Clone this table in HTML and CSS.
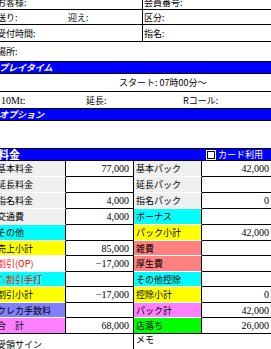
FILE: index.html
```html
<!DOCTYPE html>
<html lang="ja">
<head>
<meta charset="utf-8">
<title>伝票</title>
<link rel="stylesheet" href="styles.css">
</head>
<body>
<div class="sheet">
  <div class="info r1"><div class="l">お客様:</div><div class="r">会員番号:</div></div>
  <div class="info r2"><div class="l"><span class="send">送り:</span><span>迎え:</span></div><div class="r">区分:</div></div>
  <div class="info r3"><div class="l">受付時間:</div><div class="r">指名:</div></div>
  <div class="place">場所:</div>
  <div class="bar">プレイタイム</div>
  <div class="start">スタート: 07時00分～</div>
  <div class="ext"><span><span class="num">10Mt</span>:</span><span>延長:</span><span>Rコール:</span></div>
  <div class="bar">オプション</div>
  <div class="opt"></div>
  <div class="bar fee"><span class="title">料金</span><span class="card"><i class="box"></i>カード利用</span></div>
  <div class="fees">
    <div class="lb gray">基本料金</div><div class="v">77,000</div><div class="lb rl gray">基本パック</div><div class="v last">42,000</div>
    <div class="lb gray">延長料金</div><div class="v"></div><div class="lb rl gray">延長パック</div><div class="v last"></div>
    <div class="lb gray">指名料金</div><div class="v">4,000</div><div class="lb rl gray">指名パック</div><div class="v last">0</div>
    <div class="lb gray">交通費</div><div class="v">4,000</div><div class="lb rl cyan">ボーナス</div><div class="v last"></div>
    <div class="lb cyan">その他</div><div class="v"></div><div class="lb rl yellow">パック小計</div><div class="v last">42,000</div>
    <div class="lb yellow">売上小計</div><div class="v">85,000</div><div class="lb rl salmon">雑費</div><div class="v last"></div>
    <div class="lb red">割引(OP)</div><div class="v">−17,000</div><div class="lb rl salmon">厚生費</div><div class="v last"></div>
    <div class="lb cyan red">△割引手打</div><div class="v"></div><div class="lb rl cyan">その他控除</div><div class="v last"></div>
    <div class="lb yellow">割引小計</div><div class="v">−17,000</div><div class="lb rl yellow">控除小計</div><div class="v last">0</div>
    <div class="lb violet">クレカ手数料</div><div class="v"></div><div class="lb rl pink">パック計</div><div class="v last">42,000</div>
    <div class="lb pink end">合　計</div><div class="v">68,000</div><div class="lb rl green end">店落ち</div><div class="v last">26,000</div>
    <div class="sign">受領サイン</div><div class="memo">メモ</div>
  </div>
</div>
</body>
</html>
```

FILE: styles.css
```css
body {
  margin: 0;
  background: #fff;
  color: #000;
  font-family: "Noto Sans CJK JP", "Noto Sans", sans-serif;
  font-size: 9px;
  line-height: 11px;
  overflow: hidden;
}

.sheet {
  margin: -5px 0 0 -3px;
  width: 274px;
}

.info {
  display: grid;
  grid-template-columns: 146px 1fr;
  border-bottom: 1px solid #000;
  box-sizing: border-box;
}

.info .l {
  border-right: 1px solid #000;
  display: flex;
  align-items: center;
  white-space: nowrap;
}

.info .r {
  padding-left: 1px;
  display: flex;
  align-items: center;
}

.r1 { height: 15px; }
.r2 { height: 15px; }
.r3 { height: 17px; }

.send {
  display: inline-block;
  width: 71px;
}

.place {
  height: 19px;
  display: flex;
  align-items: center;
}

.bar {
  height: 13px;
  box-sizing: border-box;
  border-top: 1px solid #000;
  border-bottom: 1px solid #000;
  background: #0000ff;
  color: #fff;
  font-weight: bold;
  font-style: italic;
  display: flex;
  align-items: center;
  padding-left: 2px;
}

.start {
  height: 18px;
  box-sizing: border-box;
  border-bottom: 1px solid #000;
  padding-left: 122px;
  display: flex;
  align-items: center;
}

.ext {
  height: 16px;
  display: grid;
  grid-template-columns: 85px 97px 1fr;
  padding-left: 4px;
  align-items: center;
}

.num {
  font-family: "Liberation Serif", serif;
  font-size: 10px;
}

.opt {
  height: 27px;
}

.fee {
  font-style: normal;
  padding-left: 1px;
}

.fee .title {
  font-size: 11px;
}

.card {
  margin-left: auto;
  margin-right: 8px;
  font-weight: normal;
  display: flex;
  align-items: center;
  gap: 3px;
}

.box {
  width: 6px;
  height: 6px;
  border: 1px solid #000;
  background: #fff;
  box-shadow: 0 0 0 1px #fff;
}

.fees {
  display: grid;
  grid-template-columns: 69px 68px 68px 1fr;
  grid-template-rows: 16px 16px 16px 16px 16px 15px 16px 15px 16px 15px 16px 20px;
}

.fees > div {
  box-sizing: border-box;
  white-space: nowrap;
  overflow: hidden;
  display: flex;
  align-items: center;
}

.lb {
  border-right: 1px solid #000;
  border-bottom: 1px solid #fff;
}

.lb.rl {
  padding-left: 2px;
}

.lb.end {
  border-bottom-color: #000;
}

.v {
  border-right: 1px solid #000;
  border-bottom: 1px solid #000;
  justify-content: flex-end;
  padding-right: 4px;
  font-family: "Liberation Serif", serif;
  font-size: 10px;
}

.v.last {
  border-right: none;
  padding-right: 2px;
}

.gray { background: #efefef; }
.cyan { background: #00ffff; }
.yellow { background: #ffff00; }
.salmon { background: #ff8080; }
.violet { background: #8080ff; }
.pink { background: #ff80ff; }
.green { background: #00ff00; }
.red { color: #ff0000; }

.sign {
  grid-column: 1 / 3;
  border-right: 1px solid #000;
}

.memo {
  grid-column: 3 / 5;
  padding-left: 2px;
  align-items: flex-start !important;
}
```
